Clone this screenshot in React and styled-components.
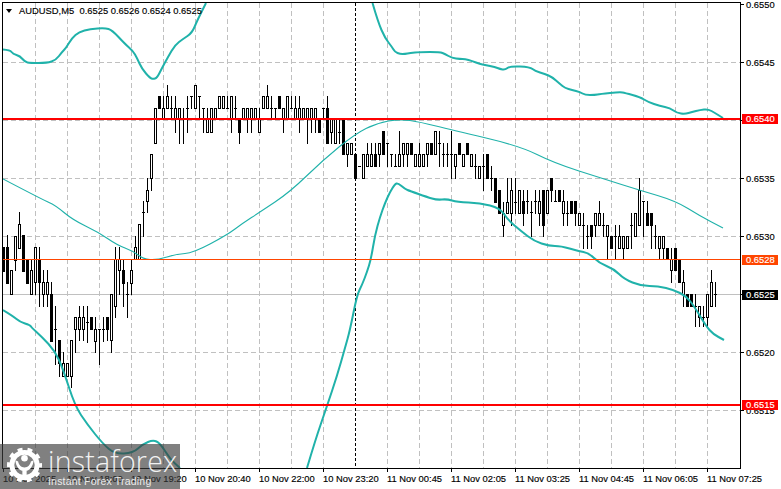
import React from 'react'
import styled, { createGlobalStyle } from 'styled-components'

// candles: [high, bodyTop, bodyBottom, low, filled], all in page pixels
const CANDLES = [
  [247,247,271,271,1],[235,247,283,283,1],[270,270,294,294,0],[236,236,260,270,0],[212,224,248,248,0],
  [235,235,271,271,1],[259,259,283,283,1],[259,270,294,294,0],[247,247,282,294,0],[247,259,282,306,1],
  [270,282,294,306,0],[270,282,294,306,0],[282,294,341,341,1],[306,329,329,364,0],[340,340,363,376,1],
  [352,363,376,376,0],[363,363,376,376,0],[340,340,376,387,0],[317,317,329,352,0],[306,317,329,340,0],
  [306,317,329,340,0],[306,322,322,342,0],[317,317,329,329,1],[317,329,341,352,0],[329,329,329,364,0],
  [317,329,329,341,0],[317,317,329,340,1],[294,294,340,352,0],[247,259,306,317,0],[247,259,270,294,0],
  [259,270,283,306,1],[282,294,294,317,0],[259,270,283,294,0],[236,247,259,259,0],[224,224,259,259,0],
  [201,212,212,236,0],[178,190,201,212,0],[154,154,178,190,0],[108,108,143,143,0],[96,96,108,108,1],
  [96,108,119,119,0],[85,96,108,108,0],[96,108,108,119,0],[96,108,119,132,0],[108,108,119,143,0],
  [108,119,119,143,0],[96,108,108,132,0],[96,96,96,108,0],[85,85,108,108,0],[96,96,96,119,0],
  [108,108,108,132,0],[108,119,132,132,0],[108,108,132,132,0],[108,108,119,119,0],[96,96,108,108,0],
  [96,96,108,108,0],[96,108,108,108,0],[96,96,119,132,0],[96,108,108,119,0],[119,119,132,143,1],
  [108,108,119,119,0],[108,108,119,132,0],[108,108,119,132,0],[108,108,119,119,0],[108,119,132,132,0],
  [96,96,108,108,0],[85,96,108,108,0],[96,108,108,119,0],[108,108,108,119,0],[96,96,108,108,1],
  [108,108,119,132,0],[96,96,119,119,0],[96,108,108,108,0],[96,108,119,119,0],[96,108,119,132,0],
  [108,108,119,119,0],[108,108,119,143,0],[108,108,119,132,0],[108,108,119,132,0],[119,119,132,132,1],
  [108,108,108,119,0],[96,108,143,143,1],[119,119,132,143,0],[119,119,143,143,0],[119,132,132,143,0],
  [119,119,154,154,1],[143,143,154,166,0],[143,143,154,154,0],[154,154,178,178,1],[166,166,166,166,0],
  [154,154,178,178,0],[143,154,166,166,0],[143,154,166,166,0],[143,154,166,166,1],[143,143,154,166,0],
  [131,131,154,154,1],[143,143,143,166,0],[154,154,154,166,0],[154,166,166,166,0],[131,154,166,166,0],
  [143,143,154,166,0],[143,143,154,166,0],[143,143,154,154,1],[154,154,166,166,0],[143,154,166,166,0],
  [154,154,166,166,0],[143,143,154,166,0],[143,143,154,154,1],[131,131,154,154,0],[131,143,143,166,0],
  [143,154,154,166,0],[143,154,154,166,0],[131,154,154,178,0],[154,154,166,178,0],[143,143,154,154,1],
  [154,154,166,166,0],[143,143,154,154,1],[154,154,166,166,0],[154,166,166,178,0],[166,166,178,178,0],
  [154,166,166,190,0],[154,154,178,178,1],[166,178,178,190,0],[178,178,202,202,1],[190,190,213,213,1],
  [202,213,225,236,0],[178,202,213,213,0],[178,190,213,225,0],[178,202,202,213,0],[190,190,213,213,0],
  [190,201,213,225,1],[190,201,201,213,0],[201,212,212,236,0],[190,201,201,213,0],[190,201,213,225,0],
  [190,190,225,236,1],[190,190,213,213,0],[178,178,190,201,1],[190,201,201,201,0],[190,190,201,201,1],
  [190,201,213,225,0],[201,213,213,225,0],[201,201,213,213,1],[201,201,213,225,1],[213,213,225,225,0],
  [213,225,225,248,0],[225,236,236,248,0],[225,225,236,248,1],[213,213,225,236,0],[201,213,225,225,0],
  [213,225,225,236,0],[225,225,236,259,0],[236,236,248,248,1],[225,236,236,259,0],[225,236,248,248,0],
  [236,236,248,259,0],[236,236,248,248,0],[213,225,225,248,0],[213,213,236,236,0],[178,190,225,225,0],
  [201,201,201,236,0],[201,213,225,225,1],[213,213,225,248,1],[225,236,236,248,0],[236,236,248,259,0],
  [236,236,248,259,0],[248,248,259,259,1],[248,259,270,282,0],[248,248,270,270,1],[259,259,282,282,1],
  [270,282,294,306,0],[294,294,306,306,1],[294,294,306,306,1],[294,306,306,326,0],[306,306,317,326,0],
  [306,317,317,326,0],[294,294,317,326,0],[270,282,306,306,0],[282,294,294,306,0],
]

const UPPER_LEFT = '3,49.5 10,50 13,54 20,56 25,62 30,63 47,63 56,60 62,52 66,48 72,38 79,32 90,29 105,28 112,30 125,44 133,51 137,58 142,69 150,78 153,79 157,78 162,68 168,57 175,45 183,39 192,33 197,21 206,3'
const UPPER_RIGHT = '372.5,3 378,22 385,38 392,47 395,52 400,54 405,54 410,53 420,52 440,52 445,54 452,58 460,59 465,59 472,61 480,64 485,65 495,67 500,69 505,70 510,66 530,67 535,71 545,74 552,77 560,84 565,88 572,90 580,92 585,95 595,95 600,94 620,92 625,93 640,97 648,102 660,106 670,108 677,113 685,114 692,112 700,110 708,109 715,113 723,118'
const MIDDLE = '3,179 43,200 55,205 73,220 98,232 117,245 133,251 143,259 157,260 177,254 193,253 227,235 243,223 260,212 290,192 323,160 355,134 377,123 400,119 420,122 452,130 520,146 554,163 604,179 639,190 676,201 700,216 723,228'
const LOWER_LEFT = '3,310 13,316 20,322 30,325 32,328 42,337 55,351 63,369 75,406 87,424 103,444 115,454 133,453 143,444 153,440 160,443 170,459 180,468'
const LOWER_RIGHT = '307,468 315,441 327,406 337,376 345,348 350,330 357,295 362,285 367,272 371,259 375,235 380,217 385,203 390,192 395,184 398,183 405,189 410,191 427,197 437,200 447,199 457,202 480,203 500,208 508,220 521,231 534,241 549,246 561,246 578,251 589,253 599,263 614,269 624,279 641,286 658,286 674,290 686,296 694,306 706,326 713,334 724,340'

const GRID_Y = [62.5, 120.5, 178.5, 236.5, 352.5, 410.5]
const GRID_X = Array.from({ length: 22 }, (_, i) => 35.5 + i * 32).filter(x => x !== 355.5)
const PRICES = ['0.6550', '0.6545', '0.6540', '0.6535', '0.6530', '0.6525', '0.6520', '0.6515']
const TIMES = ['10 Nov 2025', '10 Nov 18:00', '10 Nov 19:20', '10 Nov 20:40', '10 Nov 22:00', '10 Nov 23:20', '11 Nov 00:45', '11 Nov 02:05', '11 Nov 03:25', '11 Nov 04:45', '11 Nov 06:05', '11 Nov 07:25']

// rounds the corners of a "x,y x,y" list, the bands are smooth in the chart
const smooth = points => {
  const p = points.split(' ').map(s => s.split(',').map(Number))
  let d = `M${p[0][0]} ${p[0][1]}`
  for (let i = 1; i < p.length - 1; i++) {
    const mx = (p[i][0] + p[i + 1][0]) / 2
    const my = (p[i][1] + p[i + 1][1]) / 2
    d += ` Q${p[i][0]} ${p[i][1]} ${mx} ${my}`
  }
  const last = p[p.length - 1]
  return `${d} L${last[0]} ${last[1]}`
}

const Candle = ({ index, data }) => {
  const [high, top, bottom, low, filled] = data
  const x = 3.5 + index * 4
  return (
    <g stroke="#000" strokeWidth="1">
      <line x1={x} x2={x} y1={high} y2={low + 1} />
      {top === bottom
        ? <line x1={x - 1.5} x2={x + 1.5} y1={top + 0.5} y2={top + 0.5} />
        : <rect x={x - 1} y={top + 0.5} width="2" height={bottom - top} fill={filled ? '#000' : '#fff'} />}
    </g>
  )
}

const Chart = () => (
  <ChartSvg viewBox="3 3 737 465" shapeRendering="crispEdges">
    <g stroke="#c0c0c0" strokeWidth="1" strokeDasharray="5 3">
      {GRID_Y.map(y => <line key={y} x1="3" x2="740" y1={y} y2={y} />)}
      {GRID_X.map(x => <line key={x} x1={x} x2={x} y1="3" y2="468" />)}
    </g>
    <line x1="3" x2="740" y1="294.5" y2="294.5" stroke="#c0c0c0" />
    <line x1="355.5" x2="355.5" y1="3" y2="468" stroke="#000" strokeDasharray="3 2" />
    <g>{CANDLES.map((c, i) => <Candle key={i} index={i} data={c} />)}</g>
    <g fill="none" stroke="#20b2aa" shapeRendering="auto">
      <path d={smooth(MIDDLE)} strokeWidth="1.1" />
      <path d={smooth(UPPER_LEFT)} strokeWidth="2" />
      <path d={smooth(UPPER_RIGHT)} strokeWidth="2" />
      <path d={smooth(LOWER_LEFT)} strokeWidth="2" />
      <path d={smooth(LOWER_RIGHT)} strokeWidth="2" />
    </g>
    <line x1="3" x2="740" y1="119" y2="119" stroke="#f00" strokeWidth="2" />
    <line x1="3" x2="740" y1="405" y2="405" stroke="#f00" strokeWidth="2" />
    <line x1="3" x2="740" y1="259.5" y2="259.5" stroke="#ff4500" />
  </ChartSvg>
)

const GearLogo = () => (
  <LogoSvg viewBox="0 0 36 36">
    <circle cx="18" cy="18" r="13" fill="none" stroke="#fff" strokeWidth="5" />
    <circle cx="18" cy="18" r="16" fill="none" stroke="#fff" strokeWidth="4" strokeDasharray="4.9 5.15" strokeDashoffset="2.4" />
    <circle cx="18" cy="11" r="3.4" fill="#fff" />
    <path d="M8.5 13 C9.5 20 12.5 23 15.8 24 V33 H20.2 V24 C23.5 23 26.5 20 27.5 13 L24.5 14.5 C24 18 21.5 20.5 18 20.5 C14.5 20.5 12 18 11.5 14.5 Z" fill="#fff" />
  </LogoSvg>
)

const App = () => (
  <Page>
    <GlobalStyle />
    <ChartFrame>
      <Chart />
      <Title><Arrow />AUDUSD,M5&nbsp;&nbsp;0.6525 0.6526 0.6524 0.6525</Title>
    </ChartFrame>
    <PriceAxis>
      {PRICES.map(p => <PriceRow key={p}>{p}</PriceRow>)}
      <PriceTag $y={114} $bg="#f00">0.6540</PriceTag>
      <PriceTag $y={255} $bg="#ff4500">0.6528</PriceTag>
      <PriceTag $y={290} $bg="#000">0.6525</PriceTag>
      <PriceTag $y={400} $bg="#f00">0.6515</PriceTag>
    </PriceAxis>
    <TimeAxis>
      {TIMES.map(t => <TimeCell key={t}>{t}</TimeCell>)}
    </TimeAxis>
    <Watermark>
      <GearLogo />
      <Brand>
        <BrandName>instaforex</BrandName>
        <BrandSlogan>Instant Forex Trading</BrandSlogan>
      </Brand>
    </Watermark>
  </Page>
)

const GlobalStyle = createGlobalStyle`
  html, body {
    margin: 0;
    padding: 0;
    background: #fff;
  }
`

const Page = styled.div`
  position: relative;
  width: 781px;
  height: 489px;
  overflow: hidden;
  background: #fff;
  color: #000;
  font-family: "Liberation Sans", Arial, sans-serif;
  font-size: 9.4px;
  -webkit-text-stroke: 0.15px currentColor;
  display: grid;
  grid-template-columns: 741px 40px;
  grid-template-rows: 469px 20px;
`

const ChartFrame = styled.div`
  position: relative;
  box-sizing: border-box;
  margin: 2px 0 0 2px;
  width: 739px;
  height: 467px;
  border: 1px solid #000;
`

const ChartSvg = styled.svg`
  display: block;
  width: 737px;
  height: 465px;
`

const Title = styled.div`
  position: absolute;
  left: 3px;
  top: 2px;
  display: flex;
  align-items: center;
  line-height: 11px;
  white-space: nowrap;
`

const Arrow = styled.span`
  width: 0;
  height: 0;
  margin-right: 7px;
  border-left: 3.5px solid transparent;
  border-right: 3.5px solid transparent;
  border-top: 4px solid #000;
`

const PriceAxis = styled.div`
  position: relative;
  display: flex;
  flex-direction: column;
`

const PriceRow = styled.div`
  position: relative;
  flex: 0 0 58px;
  padding-left: 5px;
  line-height: 9px;
  &::before {
    content: '';
    position: absolute;
    left: 0;
    top: 4px;
    width: 3px;
    height: 1px;
    background: #000;
  }
`

const PriceTag = styled.div`
  position: absolute;
  left: 1px;
  top: ${p => p.$y}px;
  width: 36px;
  height: 10px;
  padding-left: 4px;
  box-sizing: border-box;
  line-height: 10px;
  color: #fff;
  background: ${p => p.$bg};
`

const TimeAxis = styled.div`
  grid-column: 1 / -1;
  display: flex;
  padding-left: 3px;
`

const TimeCell = styled.div`
  position: relative;
  flex: 0 0 64px;
  white-space: nowrap;
  padding-top: 4px;
  line-height: 11px;
  &::before {
    content: '';
    position: absolute;
    left: 0;
    top: 0;
    width: 1px;
    height: 3px;
    background: #000;
  }
`

const Watermark = styled.div`
  position: absolute;
  left: 0;
  bottom: 0;
  width: 180px;
  height: 45px;
  display: flex;
  align-items: flex-start;
  gap: 6px;
  padding: 3px 0 0 7px;
  box-sizing: border-box;
  background: rgba(60, 60, 60, 0.65);
  color: #fff;
  -webkit-text-stroke: 0;
`

const LogoSvg = styled.svg`
  flex: 0 0 35px;
  width: 35px;
  height: 36px;
`

const Brand = styled.div`
  display: flex;
  flex-direction: column;
`

const BrandName = styled.div`
  font-family: "Open Sans", sans-serif;
  font-weight: 300;
  font-size: 28.5px;
  line-height: 28px;
  letter-spacing: 0.2px;
  opacity: 0.9;
`

const BrandSlogan = styled.div`
  font-family: "Liberation Sans", sans-serif;
  font-size: 10.5px;
  line-height: 12px;
  letter-spacing: 0.2px;
  opacity: 0.85;
`

export default App
